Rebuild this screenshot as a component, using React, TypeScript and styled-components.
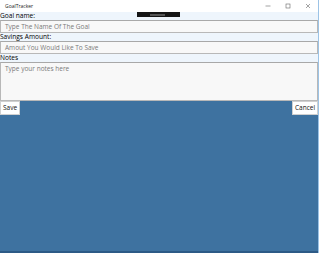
import React from "react";
import styled, { createGlobalStyle } from "styled-components";

const Global = createGlobalStyle`
  html, body { margin: 0; padding: 0; }
  body { font-family: "Open Sans", "Noto Sans", sans-serif; background: #3e72a0; }
  * { box-sizing: border-box; }
`;

const Window = styled.div`
  position: relative;
  width: 319px;
  height: 253px;
  display: flex;
  flex-direction: column;
  overflow: hidden;
  border-right: 1px solid #9cc3e6;
`;

const TitleBar = styled.div`
  height: 12px;
  background: #ffffff;
  display: flex;
  align-items: center;
  justify-content: space-between;
  padding-left: 5px;
`;

const Title = styled.span`
  font-size: 5px;
  color: #222;
  line-height: 1;
`;

const Controls = styled.div`
  display: flex;
  height: 12px;
`;

const Ctrl = styled.div`
  width: 20px;
  height: 12px;
  display: flex;
  align-items: center;
  justify-content: center;
`;

const Form = styled.div`
  background: #eef5fc;
  display: flex;
  flex-direction: column;
`;

const Label = styled.div`
  height: 8px;
  font-size: 6.6px;
  line-height: 8px;
  color: #000;
`;

const Input = styled.div<{ $h: number }>`
  height: ${(p) => p.$h}px;
  background: #f8f8f8;
  border: 1px solid #b8b8b8;
  border-top-color: #a8a8a8;
  font-size: 6.5px;
  color: #7a7a7a;
  padding: ${(p) => (p.$h > 20 ? "2px 4px" : "0 4px")};
  line-height: ${(p) => (p.$h > 20 ? "8px" : "11px")};
`;

const Footer = styled.div`
  flex: 1;
  background: #3e72a0;
  display: flex;
  justify-content: space-between;
  align-items: flex-start;
  border-bottom: 2px solid #2d5a86;
`;

const Button = styled.div<{ $w: number }>`
  width: ${(p) => p.$w}px;
  height: 14px;
  background: #ffffff;
  border: 1px solid #d0d0d0;
  font-size: 6.5px;
  line-height: 12px;
  color: #111;
  text-align: center;
`;

const DebugBar = styled.div`
  position: absolute;
  left: 137px;
  top: 12px;
  width: 43px;
  height: 5px;
  background: #151515;
  display: flex;
  align-items: center;
  padding-left: 13px;
`;

const DebugInner = styled.div`
  width: 15px;
  height: 2px;
  background: #555;
`;

export default function App() {
  return (
    <>
      <Global />
      <Window>
        <TitleBar>
          <Title>GoalTracker</Title>
          <Controls>
            <Ctrl>
              <svg width="6" height="6" viewBox="0 0 6 6">
                <line x1="0.5" y1="3" x2="5.5" y2="3" stroke="#666" strokeWidth="0.6" />
              </svg>
            </Ctrl>
            <Ctrl>
              <svg width="6" height="6" viewBox="0 0 6 6">
                <rect x="1" y="1" width="4" height="4" fill="none" stroke="#666" strokeWidth="0.6" />
              </svg>
            </Ctrl>
            <Ctrl>
              <svg width="6" height="6" viewBox="0 0 6 6">
                <path d="M1 1L5 5M5 1L1 5" stroke="#666" strokeWidth="0.6" />
              </svg>
            </Ctrl>
          </Controls>
        </TitleBar>
        <Form>
          <Label>Goal name:</Label>
          <Input $h={13}>Type The Name Of The Goal</Input>
          <Label>Savings Amount:</Label>
          <Input $h={13}>Amout You Would Like To Save</Input>
          <Label>Notes</Label>
          <Input $h={39}>Type your notes here</Input>
        </Form>
        <Footer>
          <Button $w={20}>Save</Button>
          <Button $w={26}>Cancel</Button>
        </Footer>
        <DebugBar>
          <DebugInner />
        </DebugBar>
      </Window>
    </>
  );
}
